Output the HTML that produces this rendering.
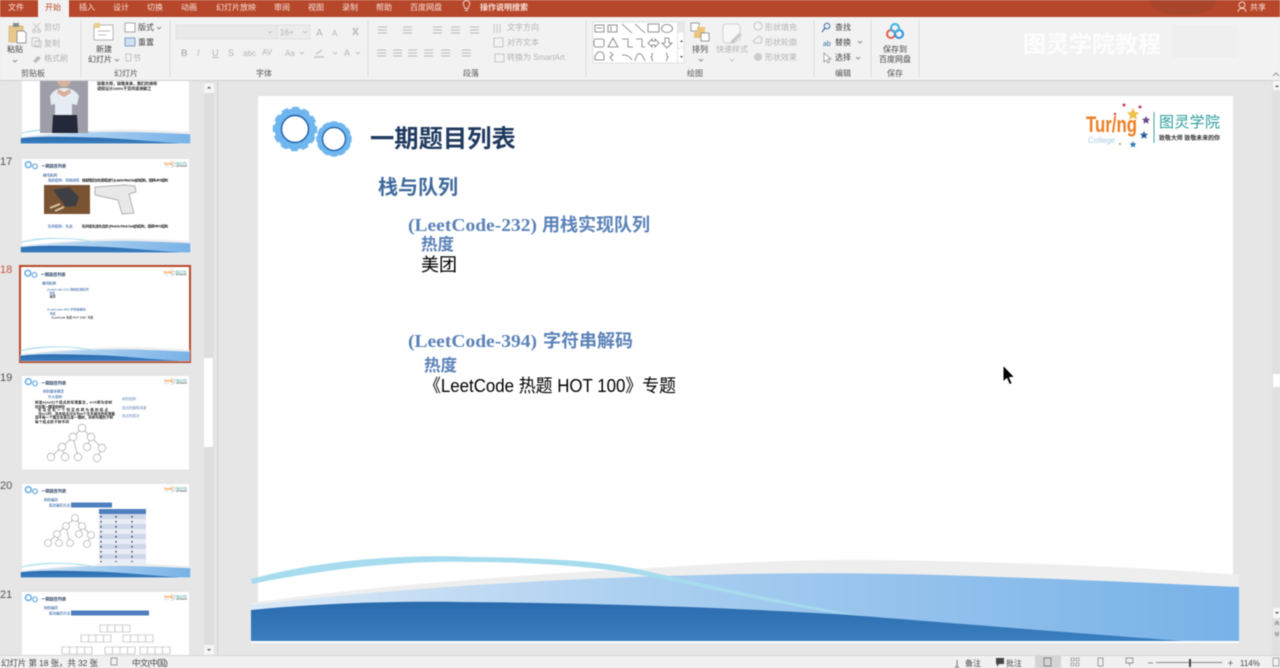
<!DOCTYPE html>
<html><head><meta charset="utf-8">
<style>
html,body{margin:0;padding:0;width:1280px;height:668px;overflow:hidden;background:#e6e6e6}
svg{display:block;filter:blur(.45px)}
text{font-family:"Liberation Sans","Noto Sans CJK SC",sans-serif;white-space:pre}
.r{font-size:8px;fill:#444}
.d{font-size:8px;fill:#b4b4b4}
.w{font-size:8px;fill:#f8e2d9}
.l{font-size:8px;fill:#555}
.n{font-size:11px;fill:#555}
.i{fill:none;stroke:#777;stroke-width:.8}
.g{fill:none;stroke:#bbb;stroke-width:.8}
.bl{font-family:"Liberation Serif","Noto Sans CJK SC",serif;font-weight:700;fill:#5b82b8}
</style></head><body>
<svg width="1280" height="668" viewBox="0 0 1280 668" xmlns="http://www.w3.org/2000/svg">
<defs>
<linearGradient id="lg" x1="0" x2="1" y1="0" y2="0"><stop offset="0" stop-color="#dbe9f7"/><stop offset=".42" stop-color="#a9cef0"/><stop offset="1" stop-color="#78b2e8"/></linearGradient>
<linearGradient id="dg" x1="0" x2="0" y1="0" y2="1"><stop offset="0" stop-color="#2a6bae"/><stop offset="1" stop-color="#3a7fc0"/></linearGradient>
<clipPath id="pc"><rect x="0" y="81" width="203" height="575"/></clipPath>
<g id="lines5"><path d="M0 0h9M0 3h9M0 6h9" stroke="#b9b9b9" stroke-width="1" fill="none"/></g>
<g id="wave">
<rect x="251" y="640" width="988" height="3" fill="#fff"/>
<path d="M251 603C380 585 520 575 650 568C730 563 800 559 880 560C1000 562 1130 566 1239 575L1239 640L251 640Z" fill="#eeeeee"/>
<path d="M251 605C400 588 560 578 704 575C800 572 900 573 1000 577C1090 580 1170 584 1239 587L1239 641L251 641Z" fill="url(#lg)"/>
<path d="M251 610C320 603 400 601 459 602C600 603 740 608 850 615C960 624 1090 634 1182 641L251 641Z" fill="url(#dg)"/>
<path d="M251 579C320 560 400 554 472 557C560 558 610 562 651 572C730 590 800 605 862 616C800 610 720 590 651 577C610 568 540 562 472 562C400 560 320 570 252 584Z" fill="#a6dcee"/>
</g>
<g id="gears">
<circle cx="295" cy="129" r="16.5" fill="none" stroke="#6fb6ee" stroke-width="8"/>
<circle cx="295" cy="129" r="20.500" fill="none" stroke="#6fb6ee" stroke-width="3.500" stroke-dasharray="7 3.730" stroke-dashoffset="3"/>
<circle cx="295" cy="129" r="13.500" fill="#fff" stroke="#1d5ea8" stroke-width="1.400"/>
<circle cx="334" cy="139" r="14" fill="none" stroke="#6fb6ee" stroke-width="6"/>
<circle cx="334" cy="139" r="16.300" fill="none" stroke="#6fb6ee" stroke-width="2.800" stroke-dasharray="6 2.530" stroke-dashoffset="3"/>
<circle cx="334" cy="139" r="11.500" fill="#fff" stroke="#1d5ea8" stroke-width="1.300"/>
</g>
<g id="logo">
<text x="1086" y="132" font-size="22" font-weight="700" style="fill:#ef7d22" textLength="51" lengthAdjust="spacingAndGlyphs">Tur/ng</text>
<text x="1088" y="143" font-size="8" style="fill:#a8cfe0">College</text>
<path d="M1154 112V143" stroke="#3ba6a2" stroke-width="1"/>
<text x="1159" y="127" font-size="15" style="fill:#2a9d9a" textLength="61">图灵学院</text>
<text x="1159" y="140" font-size="6" style="fill:#333" font-weight="700" textLength="61" lengthAdjust="spacingAndGlyphs">致敬大师 致敬未来的你</text>
<circle cx="1124" cy="105" r="1.5" fill="#c23b5a"/><circle cx="1140" cy="107" r="1.5" fill="#c23b5a"/>
<circle cx="1115" cy="114" r="1.3" fill="#d9534f"/>
<path d="M1133 108l2 4 4 .5-3 3 1 4-4-2-4 2 1-4-3-3 4-.5z" fill="#efc04a"/>
<path d="M1146 116l1.2 2.6 2.8.3-2 2 .6 2.8-2.6-1.4-2.6 1.4.6-2.8-2-2 2.8-.3z" fill="#6a4a8c"/>
<path d="M1144 131l1.2 2.6 2.8.3-2 2 .6 2.8-2.6-1.4-2.6 1.4.6-2.8-2-2 2.8-.3z" fill="#2d5f9e"/>
<path d="M1133 141l1 2.2 2.4.3-1.7 1.7.5 2.3-2.2-1.2-2.2 1.2.5-2.3-1.7-1.7 2.4-.3z" fill="#3c7cbc"/>
<circle cx="1120" cy="144" r="1" fill="#7aa84a"/>
</g>
<g id="master">
<use href="#gears"/>
<text x="370" y="147" font-size="24.3" font-weight="700" style="fill:#1f3a5f">一期题目列表</text>
<use href="#logo"/>
</g>
<g id="s18">
<text x="378" y="194" font-size="20" font-weight="700" style="fill:#3f6a9c">栈与队列</text>
<text class="bl" x="408" y="231" font-size="18" textLength="129" lengthAdjust="spacingAndGlyphs">(LeetCode-232)</text>
<text x="542" y="231" font-size="18" font-weight="700" style="fill:#5b82b8" textLength="108">用栈实现队列</text>
<text x="421" y="250" font-size="16.500" font-weight="700" style="fill:#5b82b8">热度</text>
<text x="421" y="271" font-size="18" style="fill:#000">美团</text>
<text class="bl" x="408" y="347" font-size="18" textLength="129" lengthAdjust="spacingAndGlyphs">(LeetCode-394)</text>
<text x="543" y="347" font-size="18" font-weight="700" style="fill:#5b82b8" textLength="90">字符串解码</text>
<text x="424" y="371" font-size="16.500" font-weight="700" style="fill:#5b82b8">热度</text>
<text x="424" y="392" font-size="18" style="fill:#000" textLength="252" lengthAdjust="spacingAndGlyphs">《LeetCode 热题 HOT 100》专题</text>
</g>
</defs>

<!-- backgrounds -->
<rect width="1280" height="668" fill="#e6e6e6"/>
<rect x="0" y="0" width="1280" height="17" fill="#b7472a"/>
<rect x="0" y="17" width="1280" height="63" fill="#f2f2f2"/>
<rect x="0" y="80" width="1280" height="1" fill="#d2d2d2"/>

<!-- top blob -->
<ellipse cx="1183" cy="2" rx="33" ry="13" fill="#a8452a"/>

<!-- tabs -->
<rect x="38" y="0" width="31" height="18" fill="#f2f2f2"/>
<g class="tabs">
<text class="w" x="8" y="10">文件</text>
<text x="45" y="10" font-size="8" style="fill:#b7472a">开始</text>
<text class="w" x="79" y="10">插入</text>
<text class="w" x="113" y="10">设计</text>
<text class="w" x="147" y="10">切换</text>
<text class="w" x="181" y="10">动画</text>
<text class="w" x="216" y="10">幻灯片放映</text>
<text class="w" x="274" y="10">审阅</text>
<text class="w" x="308" y="10">视图</text>
<text class="w" x="342" y="10">录制</text>
<text class="w" x="376" y="10">帮助</text>
<text class="w" x="410" y="10">百度网盘</text>
<text class="w" x="480" y="10" font-weight="700">操作说明搜索</text>
<text class="w" x="1250" y="10">共享</text>
</g>
<path d="M464 6a3.300 3.300 0 1 1 5 0c-.6.8-.8 1.300-.8 2.500h-3.400c0-1.200-.2-1.700-.8-2.500zM465 10.500h3" fill="none" stroke="#f6dcd2" stroke-width=".9"/>
<circle cx="1242" cy="5" r="3" fill="none" stroke="#f6dcd2" stroke-width=".9"/><path d="M1238 12c0-5 8-5 8 0" fill="none" stroke="#f6dcd2" stroke-width=".9"/>

<!-- group separators -->
<path d="M81 20V77M170 20V77M368 20V77M586 20V77M814 20V77M871 20V77M919 20V77" stroke="#dcdcdc" stroke-width="1"/>

<!-- clipboard -->
<rect x="9" y="26" width="14" height="16" fill="#e6c98a" stroke="#c4a46a" stroke-width=".6"/>
<rect x="13" y="23" width="6" height="4" fill="#8a8a8a"/>
<path d="M17 31h7l2 2v10h-9z" fill="#fff" stroke="#777" stroke-width=".7"/>
<text class="r" x="7" y="52">粘贴</text>
<path d="M13 60l2 2 2-2" class="i"/>
<path d="M33 23l7 7M40 23l-7 7" class="g"/><circle cx="34" cy="31" r="1.500" class="g"/><circle cx="39" cy="31" r="1.500" class="g"/>
<text class="d" x="44" y="30">剪切</text>
<rect x="32" y="38" width="7" height="8" class="g"/><rect x="35" y="41" width="6" height="6" class="g"/>
<text class="d" x="44" y="46">复制</text>
<path d="M33 61l5-5 3 2-5 5z" fill="#bbb"/>
<text class="d" x="44" y="61">格式刷</text>
<text class="l" x="21" y="76">剪贴板</text>

<!-- new slide -->
<rect x="94" y="25" width="19" height="15" fill="#fff" stroke="#999" stroke-width=".7"/>
<rect x="94" y="23" width="6" height="5" fill="#e9cf8d"/>
<path d="M98 31h12M98 35h8" stroke="#bbb" stroke-width="1"/>
<text class="r" x="96" y="52">新建</text>
<text class="r" x="88" y="62">幻灯片</text>
<path d="M115 59l2 2 2-2" class="i"/>
<rect x="125" y="23" width="10" height="9" fill="#fff" stroke="#888" stroke-width=".7"/>
<rect x="125" y="38" width="10" height="8" fill="#cfe0f0" stroke="#5b82b8" stroke-width=".7"/>
<text class="r" x="138" y="30">版式</text><path d="M157 27l2 2 2-2" class="i"/>
<text class="r" x="138" y="45">重置</text>
<rect x="126" y="54" width="5" height="7" class="g"/>
<text class="d" x="133" y="61">节</text>
<text class="l" x="114" y="76">幻灯片</text>

<!-- font -->
<rect x="176" y="25" width="101" height="14" fill="#e9e9e9" stroke="#dcdcdc" stroke-width=".7"/>
<rect x="277" y="25" width="33" height="14" fill="#ececec" stroke="#dcdcdc" stroke-width=".7"/>
<text class="d" x="280" y="35">16+</text>
<path d="M268 31l2 2 2-2M303 31l2 2 2-2" class="g"/>
<text class="d" x="316" y="36" style="font-size:10px">A</text><text class="d" x="332" y="36">A</text>
<path d="M353 28l5 7M358 28l-5 7" stroke="#c5c5c5" stroke-width="2"/>
<text class="d" x="181" y="56" style="font-size:9px;font-weight:700">B</text>
<text class="d" x="197" y="56" style="font-size:9px;font-style:italic">I</text>
<text class="d" x="212" y="56" style="font-size:9px;text-decoration:underline">U</text>
<text class="d" x="228" y="56" style="font-size:9px">S</text>
<text class="d" x="243" y="56" style="font-size:8px">abc</text>
<text class="d" x="262" y="55" style="font-size:8px">AV</text>
<text class="d" x="285" y="56" style="font-size:8px">Aa</text>
<text class="d" x="344" y="56" style="font-size:9px">A</text>
<path d="M316 54l6-4M314 57h10" stroke="#c5c5c5" stroke-width="1.500" fill="none"/>
<path d="M300 52l2 2 2-2M333 52l2 2 2-2M356 52l2 2 2-2" class="g"/>
<text class="l" x="256" y="76">字体</text>

<!-- paragraph -->
<use href="#lines5" x="378" y="27"/><use href="#lines5" x="403" y="27"/><use href="#lines5" x="433" y="27"/><use href="#lines5" x="451" y="27"/><use href="#lines5" x="470" y="27"/>
<use href="#lines5" x="377" y="50"/><use href="#lines5" x="393" y="50"/><use href="#lines5" x="408" y="50"/><use href="#lines5" x="424" y="50"/><use href="#lines5" x="441" y="50"/><use href="#lines5" x="462" y="50"/>
<path d="M494 24v9M497 24v9M500 24v9" class="g"/>
<rect x="494" y="38" width="9" height="9" class="g"/>
<rect x="495" y="54" width="9" height="8" class="g"/>
<text class="d" x="507" y="30">文字方向</text>
<text class="d" x="507" y="45">对齐文本</text>
<text class="d" x="507" y="60">转换为 SmartArt</text>
<text class="l" x="463" y="76">段落</text>

<!-- shapes gallery -->
<rect x="593" y="22" width="91" height="41" fill="#fff" stroke="#d8d8d8" stroke-width=".7"/>
<path d="M677.500 22V63M677.500 32H684M677.500 48H684" stroke="#d8d8d8" stroke-width=".7"/>
<rect x="678" y="22.500" width="6" height="10" fill="#e8e8e8"/>
<g class="i">
<rect x="595" y="25" width="9" height="7"/><path d="M597 28h5"/>
<rect x="608" y="25" width="9" height="7"/><path d="M611 26v5"/>
<path d="M622 24l10 9M635 24l10 9"/>
<rect x="648" y="24" width="11" height="8"/>
<ellipse cx="667" cy="28.500" rx="5.500" ry="4"/>
<rect x="594" y="39" width="10" height="8" rx="2"/>
<path d="M613 38l5 9h-10z"/>
<path d="M622 39h6v8h5M636 39h6v8h3"/>
<path d="M648 43l4-4v2h3v-2l4 4-4 4v-2h-3v2z"/>
<path d="M665 38h4v5h3l-5 5-5-5h3z"/>
<path d="M595 56l3-4h4l2 3v5h-9z"/>
<path d="M610 52l3 3-3 2 3 4"/>
<path d="M622 55c3 0 7 0 10 5"/>
<path d="M635 61c2-10 6-10 10 0"/>
<path d="M653 53c-2 1 0 3-2 4c2 1 0 3 2 4"/>
<path d="M666 53c2 1 0 3 2 4c-2 1 0 3-2 4"/>
</g>
<path d="M680 42l1.500-2 1.500 2zM679.500 54h4M680 56l1.500 2 1.500-2z" fill="#555"/>

<!-- arrange -->
<rect x="691" y="23" width="8" height="8" fill="#fff" stroke="#777" stroke-width=".7"/>
<rect x="697" y="27" width="8" height="10" fill="#eac57a"/>
<rect x="694" y="32" width="8" height="6" fill="#eac57a"/>
<rect x="701" y="33" width="8" height="8" fill="#fff" stroke="#777" stroke-width=".7"/>
<text class="r" x="692" y="52">排列</text>
<path d="M699 59l2 2 2-2" class="i"/>
<!-- quick style -->
<path d="M724 24h13c2 0 3 1 3 3v12l-6 4h-7c-3 0-4-1-4-3V27c0-2 1-3 3-3z" fill="#f7f7f7" stroke="#c8c8c8" stroke-width=".8"/>
<path d="M730 42l9-9 3 2-9 8z" fill="#c8c8c8"/>
<text class="d" x="716" y="52">快速样式</text>
<path d="M730 59l2 2 2-2" class="g"/>
<circle cx="758" cy="26" r="4" class="g"/><path d="M753 41l6-5 3 2-1 5h-6z" class="g"/><circle cx="758" cy="57" r="4" fill="#ccc"/>
<text class="d" x="765" y="30">形状填充</text>
<text class="d" x="765" y="45">形状轮廓</text>
<text class="d" x="765" y="60">形状效果</text>
<text class="l" x="687" y="76">绘图</text>

<!-- editing -->
<circle cx="827" cy="26" r="2.800" fill="none" stroke="#3c6ea6" stroke-width="1"/><path d="M825 28l-3 4" stroke="#3c6ea6" stroke-width="1.200"/>
<text class="r" x="835" y="30">查找</text>
<text x="823" y="46" font-size="7" style="fill:#3c6ea6">ab</text>
<text class="r" x="835" y="45">替换</text><path d="M858 41l2 2 2-2" class="i"/>
<path d="M824 53v9l2.500-2 1.500 3 1.500-1-1.500-3h3z" fill="#fff" stroke="#888" stroke-width=".7"/>
<text class="r" x="835" y="60">选择</text><path d="M856 57l2 2 2-2" class="i"/>
<text class="l" x="835" y="76">编辑</text>

<!-- baidu -->
<circle cx="891" cy="34" r="4" fill="none" stroke="#e2604f" stroke-width="2"/>
<circle cx="899" cy="34" r="4" fill="none" stroke="#2f8fe0" stroke-width="2"/>
<circle cx="895" cy="28" r="4" fill="none" stroke="#3ab4e8" stroke-width="2"/>
<text class="r" x="883" y="52">保存到</text>
<text class="r" x="879" y="62">百度网盘</text>
<text class="l" x="887" y="76">保存</text>

<!-- watermark -->
<rect x="1172" y="25" width="65" height="33" fill="#efefef"/>
<text x="1023" y="52" font-size="23" font-weight="700" style="fill:#fff" textLength="138" opacity=".92">图灵学院教程</text>
<path d="M1273 76l3-3 3 3" fill="none" stroke="#777" stroke-width=".8"/>

<!-- left panel -->
<rect x="204" y="81" width="10" height="575" fill="#dedede"/>
<rect x="204" y="83" width="10" height="10" fill="#f5f5f5"/><path d="M207 88.500l2-2 2 2z" fill="#555"/>
<rect x="204" y="358" width="9" height="89" fill="#fff"/>
<rect x="204" y="645" width="10" height="10" fill="#f5f5f5"/><path d="M207 649l2 2 2-2z" fill="#555"/>
<rect x="217" y="81" width="1" height="575" fill="#d4d4d4"/>

<g clip-path="url(#pc)">
<text class="n" x="0" y="165">17</text>
<text x="0" y="273" font-size="11" style="fill:#c8573a">18</text>
<text class="n" x="0" y="381">19</text>
<text class="n" x="0" y="489">20</text>
<text class="n" x="0" y="598">21</text>

<!-- thumb 16 -->
<rect x="22" y="50" width="167" height="93.500" fill="#fff"/>
<use href="#wave" transform="translate(22 50) scale(.1715) translate(-258 -96)"/>
<rect x="40" y="81" width="48" height="52" fill="#9e9ea8"/>
<path d="M50 96c3-5 7-8 14-8s12 3 15 8l-2 9-5-1v12H55v-12l-4 1z" fill="#e6ecf4"/>
<circle cx="64" cy="80" r="7" fill="#d8b09a"/>
<path d="M58 89l6 3 6-3 1 4-7 4-7-4z" fill="#d8b09a"/>
<path d="M53 115h24l1 18H52z" fill="#23283a"/>
<text x="97" y="85" font-size="4" font-weight="700" style="fill:#222">致敬大师，致敬未来，我们的讲师</text>
<text x="97" y="90" font-size="4" font-weight="700" style="fill:#222">课程设计100%干货内容讲解之</text>

<!-- thumb 17 -->
<rect x="22" y="159" width="167" height="93.500" fill="#fff"/>
<use href="#master" transform="translate(22 159) scale(.1715) translate(-258 -96)"/>
<use href="#wave" transform="translate(22 159) scale(.1715) translate(-258 -96)"/>
<text x="43" y="176.500" font-size="3.500" font-weight="700" style="fill:#3f6a9c">栈与队列</text>
<text x="48" y="181.500" font-size="3.500" font-weight="700" style="fill:#5b82b8">栈的结构：特殊线性</text>
<text x="82" y="181.500" font-size="3.500" font-weight="700" style="fill:#111" textLength="86">栈是限定仅在表尾进行 (Last In First Out)的结构，简称LIFO结构</text>
<rect x="44" y="185" width="46" height="29" fill="#7a5332"/>
<path d="M53 190l16-3 10 10-3 9-10 1z" fill="#3d3f44"/><path d="M50 208l10-4M55 211l9-4" stroke="#d8c8a8" stroke-width="2"/>
<path d="M95 187l30-2 10 1 1 6-7 2 5 19-12 1-4-14-5-1-18-4z" fill="#e8e8e8" stroke="#999" stroke-width=".7"/>
<text x="48" y="227.500" font-size="3.500" font-weight="700" style="fill:#5b82b8">队列结构：先进</text>
<text x="82" y="227.500" font-size="3.500" font-weight="700" style="fill:#111" textLength="86">队列是先进先出的 (First In First Out)的结构，简称FIFO结构</text>

<!-- thumb 18 -->
<rect x="20" y="266" width="170" height="96" fill="#fff" stroke="#b7472a" stroke-width="2"/>
<g transform="translate(21.500 267.500) scale(.1715) translate(-258 -96)">
<use href="#master"/><use href="#s18"/><use href="#wave"/>
</g>

<!-- thumb 19 -->
<rect x="22" y="376" width="167" height="93.500" fill="#fff"/>
<use href="#master" transform="translate(22 376) scale(.1715) translate(-258 -96)"/>
<text x="43" y="392.500" font-size="3.500" font-weight="700" style="fill:#5b82b8">树的基本概念</text>
<text x="48" y="398" font-size="3.500" font-weight="700" style="fill:#5b82b8">什么是树</text>
<g font-size="3.500" font-weight="700" style="fill:#111">
<text x="35" y="403.500" textLength="77">树是n(n≥0)个结点的有限集合，n=0称为空树</text>
<text x="35" y="408" textLength="30">在任意一棵非空树中</text>
<text x="38" y="411" textLength="70">有且仅有一个特定的称为根的结点</text>
<text x="38" y="415" textLength="77">当n&gt;1时，其余结点可分为m个互不相交的有限集</text>
<text x="35" y="418.500" textLength="78">其中每一个集合本身又是一棵树，并称为根的子树</text>
<text x="35" y="423" textLength="34">每个结点的子树不同</text>
</g>
<text x="122" y="400" font-size="3.500" style="fill:#5b82b8">树的结构</text>
<text x="122" y="409" font-size="3.500" style="fill:#5b82b8">结点的度和深度</text>
<text x="122" y="417" font-size="3.500" style="fill:#5b82b8">结点的层次</text>
<g fill="#fff" stroke="#999" stroke-width=".6">
<path d="M82 428L73 437L62 447L51 457M62 447L65 457M73 437L78 457M82 428L91 437L87 447M91 437L102 448L97 458"/>
<circle cx="82" cy="428" r="3.800"/><circle cx="73" cy="437" r="3.800"/><circle cx="91" cy="437" r="3.800"/><circle cx="62" cy="447" r="3.800"/><circle cx="87" cy="447" r="3.800"/><circle cx="102" cy="448" r="3.800"/><circle cx="51" cy="457" r="3.800"/><circle cx="65" cy="457" r="3.800"/><circle cx="78" cy="457" r="3.800"/><circle cx="97" cy="458" r="3.800"/>
</g>

<!-- thumb 20 -->
<rect x="22" y="484" width="167" height="93.500" fill="#fff"/>
<use href="#master" transform="translate(22 484) scale(.1715) translate(-258 -96)"/>
<use href="#wave" transform="translate(22 484) scale(.1715) translate(-258 -96)"/>
<text x="44" y="501" font-size="3.500" font-weight="700" style="fill:#5b82b8">树的遍历</text>
<text x="49" y="506.500" font-size="3.500" font-weight="700" style="fill:#5b82b8">层次遍历方法</text>
<rect x="71" y="502.500" width="41" height="5" fill="#4f7fbd"/>
<g fill="#fff" stroke="#999" stroke-width=".6">
<path d="M75 518L66 526L57 534L48 543M57 534L59 543M66 526L70 543M75 518L82 526L79 534M82 526L91 535L87 544"/>
<circle cx="75" cy="518" r="3.500"/><circle cx="66" cy="526" r="3.500"/><circle cx="82" cy="526" r="3.500"/><circle cx="57" cy="534" r="3.500"/><circle cx="79" cy="534" r="3.500"/><circle cx="91" cy="535" r="3.500"/><circle cx="48" cy="543" r="3.500"/><circle cx="59" cy="543" r="3.500"/><circle cx="70" cy="543" r="3.500"/><circle cx="87" cy="544" r="3.500"/>
</g>
<rect x="99" y="509" width="47" height="5" fill="#4f7fbd"/>
<rect x="99" y="514" width="47" height="5" fill="#cfd8ea"/><rect x="99" y="519" width="47" height="5" fill="#e8edf6"/><rect x="99" y="524" width="47" height="5" fill="#cfd8ea"/><rect x="99" y="529" width="47" height="5" fill="#e8edf6"/><rect x="99" y="534" width="47" height="5" fill="#cfd8ea"/><rect x="99" y="539" width="47" height="5" fill="#e8edf6"/><rect x="99" y="544" width="47" height="5" fill="#cfd8ea"/><rect x="99" y="549" width="47" height="5" fill="#e8edf6"/><rect x="99" y="554" width="47" height="5" fill="#cfd8ea"/><rect x="99" y="559" width="47" height="5" fill="#e8edf6"/>
<path d="M101 516v46M116 516v46M132 516v46" stroke="#222" stroke-width="1.200" stroke-dasharray="1.500 3.500" fill="none"/>

<!-- thumb 21 -->
<rect x="22" y="592" width="167" height="70" fill="#fff"/>
<use href="#master" transform="translate(22 592) scale(.1715) translate(-258 -96)"/>
<text x="44" y="609" font-size="3.500" font-weight="700" style="fill:#5b82b8">树的遍历</text>
<text x="49" y="614.500" font-size="3.500" font-weight="700" style="fill:#5b82b8">层次遍历方法</text>
<rect x="71" y="610.500" width="78" height="5" fill="#4f7fbd"/>
<g fill="#fff" stroke="#aaa" stroke-width=".6">
<path d="M100 625h30v7h-30zM107.500 625v7M115 625v7M122.500 625v7"/>
<path d="M81 635h30v7H81zM88.500 635v7M96 635v7M103.500 635v7M123 635h30v7h-30zM130.500 635v7M138 635v7M145.500 635v7"/>
<path d="M62 647h30v7H62zM69.500 647v7M77 647v7M84.500 647v7M105 647h30v7h-30zM112.500 647v7M120 647v7M127.500 647v7M140 647h30v7h-30zM147.500 647v7M155 647v7M162.500 647v7"/>
</g>
</g>

<!-- main slide -->
<rect x="258" y="96" width="975" height="546" fill="#fff"/>
<use href="#master"/>
<use href="#s18"/>
<use href="#wave"/>

<!-- main scrollbar -->
<rect x="1272" y="81" width="8" height="575" fill="#e0e0e0"/>
<rect x="1273" y="81" width="7" height="9" fill="#f7f7f7"/><path d="M1275 87l2-2 2 2z" fill="#555"/>
<rect x="1273" y="374" width="7" height="13" fill="#fff"/>
<rect x="1273" y="608" width="7" height="10" fill="#f7f7f7"/><path d="M1275 612l2 2 2-2z" fill="#555"/>
<path d="M1275 623l2-2 2 2M1275 625l2-2 2 2M1275 632l2 2 2-2M1275 634l2 2 2-2" fill="none" stroke="#666" stroke-width=".6"/>

<!-- cursor -->
<path d="M1003 365V382l3.800-3.400 2.600 6 2.800-1.200-2.600-5.800 5-.4z" fill="#000" stroke="#fff" stroke-width="1"/>

<!-- status bar -->
<rect x="0" y="655" width="1280" height="1" fill="#d6d6d6"/>
<rect x="0" y="656" width="1280" height="12" fill="#f1f1f1"/>
<text x="1" y="666" font-size="8.500" style="fill:#444" textLength="97">幻灯片 第 18 张，共 32 张</text>
<rect x="111" y="658" width="6" height="7" fill="none" stroke="#777" stroke-width=".7"/>
<text x="132" y="666" font-size="8.500" style="fill:#444" textLength="36">中文(中国)</text>
<path d="M957 660v7M955 667h4" stroke="#777" stroke-width="1"/>
<text x="965" y="666" font-size="8" style="fill:#444">备注</text>
<path d="M996 658h8v6h-5l-2 3v-3h-1z" fill="#444"/>
<text x="1006" y="666" font-size="8" style="fill:#444">批注</text>
<rect x="1035" y="656" width="26" height="12" fill="#d4d4d4"/>
<rect x="1044" y="658" width="7" height="8" fill="none" stroke="#666" stroke-width=".7"/>
<path d="M1071 658h3v3h-3zM1076 658h3v3h-3zM1071 663h3v3h-3zM1076 663h3v3h-3z" fill="none" stroke="#777" stroke-width=".6"/>
<rect x="1098" y="658" width="5" height="8" fill="none" stroke="#777" stroke-width=".7"/>
<path d="M1126 658h7v5h-7zM1129.500 663v3" fill="none" stroke="#777" stroke-width=".7"/>
<path d="M1148 663h5M1156 662.500h66M1228 663h5M1230.500 660.500v5" stroke="#666" stroke-width=".8"/>
<rect x="1189" y="659" width="2" height="8" fill="#444"/>
<text x="1240" y="666" font-size="8" style="fill:#444">114%</text>
<rect x="1273" y="658" width="6" height="8" fill="none" stroke="#888" stroke-width=".7"/>
</svg>
</body></html>
